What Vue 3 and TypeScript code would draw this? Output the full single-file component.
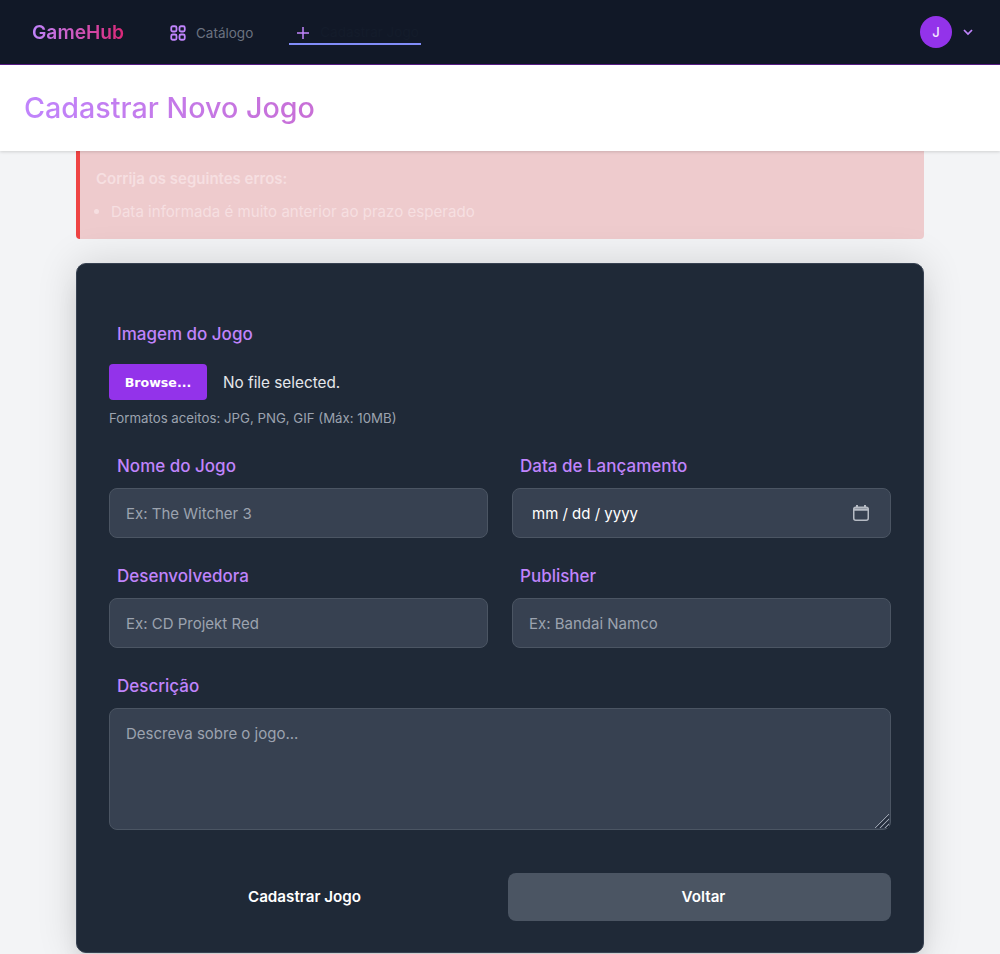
<script setup lang="ts">
const row1 = [
  { label: 'Nome do Jogo', placeholder: 'Ex: The Witcher 3' },
]
const row2 = [
  { label: 'Desenvolvedora', placeholder: 'Ex: CD Projekt Red' },
  { label: 'Publisher', placeholder: 'Ex: Bandai Namco' },
]
</script>

<template>
  <div class="page">
    <nav class="nav">
      <span class="logo">GameHub</span>
      <a class="link">
        <svg class="grid-icon" width="18" height="18" viewBox="0 0 24 24" fill="none" stroke="#c084fc" stroke-width="2.4">
          <rect x="3" y="3" width="7" height="7" rx="2" />
          <rect x="14" y="3" width="7" height="7" rx="2" />
          <rect x="3" y="14" width="7" height="7" rx="2" />
          <rect x="14" y="14" width="7" height="7" rx="2" />
        </svg>
        <span>Catálogo</span>
      </a>
      <a class="link active">
        <svg class="plus-icon" width="18" height="18" viewBox="0 0 24 24" fill="none" stroke="#c084fc" stroke-width="2">
          <path d="M12 4v16M4 12h16" />
        </svg>
        <span class="hidden-label">Cadastrar Jogo</span>
      </a>
      <div class="user">
        <span class="avatar">J</span>
        <svg width="12" height="12" viewBox="0 0 24 24" fill="none" stroke="#c084fc" stroke-width="3.5">
          <path d="M4 8l8 8 8-8" />
        </svg>
      </div>
    </nav>

    <header class="header">
      <h1>Cadastrar Novo Jogo</h1>
    </header>

    <main class="main">
      <div class="alert">
        <strong>Corrija os seguintes erros:</strong>
        <ul><li>Data informada é muito anterior ao prazo esperado</li></ul>
      </div>

      <form class="card" @submit.prevent>
        <div class="field file-field">
          <label>Imagem do Jogo</label>
          <div class="file">
            <button type="button" class="browse">Browse...</button>
            <span>No file selected.</span>
          </div>
          <small>Formatos aceitos: JPG, PNG, GIF (Máx: 10MB)</small>
        </div>

        <div class="grid">
          <div class="field" v-for="f in row1" :key="f.label">
            <label>{{ f.label }}</label>
            <input :placeholder="f.placeholder" />
          </div>
          <div class="field">
            <label>Data de Lançamento</label>
            <div class="date">
              <span>mm / dd / yyyy</span>
              <svg width="18" height="18" viewBox="0 0 18 18" fill="none" stroke="#b6bbc4" stroke-width="1.5">
                <rect x="1.75" y="3.25" width="14.5" height="13" rx="2" />
                <path d="M1.75 5.5h14.5" stroke-width="2.5" />
                <path d="M5 1v3M13 1v3" stroke-width="2" />
              </svg>
            </div>
          </div>
          <div class="field" v-for="f in row2" :key="f.label">
            <label>{{ f.label }}</label>
            <input :placeholder="f.placeholder" />
          </div>
        </div>

        <div class="field">
          <label>Descrição</label>
          <div class="area">
            <textarea placeholder="Descreva sobre o jogo..."></textarea>
            <svg class="grip" width="16" height="16" viewBox="0 0 16 16" stroke-width="1">
              <path d="M15 1L1 15M15 6L6 15M15 11L11 15" stroke="#9ca3af" />
              <path d="M15 3.5L3.5 15M15 8.5L8.5 15M15 13L13 15" stroke="#111827" />
            </svg>
          </div>
        </div>

        <div class="actions">
          <button type="submit" class="btn submit">Cadastrar Jogo</button>
          <button type="button" class="btn back">Voltar</button>
        </div>
      </form>
    </main>
  </div>
</template>

<style>
html, body { margin: 0; background: #f3f4f6; }
</style>

<style scoped>
.page {
  font-family: "Inter", "Noto Sans", sans-serif;
  background: #f3f4f6;
  min-height: 954px;
}
.nav {
  height: 64px;
  background: #111827;
  border-bottom: 1px solid #581c87;
  display: flex;
  align-items: center;
  padding: 0 26px 0 32px;
}
.logo {
  font-size: 19.2px;
  font-weight: 600;
  width: 138px;
  background: linear-gradient(90deg, #c084fc, #db2777);
  background-clip: text;
  -webkit-background-clip: text;
  color: transparent;
  background-size: 92px 100%;
  background-repeat: no-repeat;
}
.link {
  display: flex;
  align-items: center;
  gap: 8px;
  font-size: 13.5px;
  color: #6b7280;
  height: 24px;
  padding-top: 1px;
}
.grid-icon { margin-left: -1px; margin-right: 1px; }
.link.active {
  margin-left: 36px;
  height: 24px;
  width: 132px;
  box-sizing: border-box;
  padding: 0 0 0 5px;
  border-bottom: 2px solid #818cf8;
  margin-top: 1px;
}
.plus-icon { margin-top: 2px; }
.hidden-label { color: #141c2b; white-space: nowrap; }
.user { margin-left: auto; display: flex; align-items: center; gap: 10px; }
.avatar {
  width: 32px;
  height: 32px;
  border-radius: 50%;
  background: #9333ea;
  color: #f3e8ff;
  display: flex;
  align-items: center;
  justify-content: center;
  font-size: 13px;
  font-weight: 500;
}
.header {
  height: 86px;
  box-sizing: border-box;
  padding: 0 24px 2px;
  background: #fff;
  display: flex;
  align-items: center;
  box-shadow: 0 1px 3px rgba(0, 0, 0, 0.15);
  position: relative;
}
h1 {
  margin: 0;
  font-size: 28.7px;
  font-weight: 500;
  background: linear-gradient(90deg, #c084fc, #c86fd6);
  background-clip: text;
  -webkit-background-clip: text;
  color: transparent;
}
.main { width: 848px; margin: 0 auto; }
.alert {
  box-sizing: border-box;
  height: 88px;
  background: #eecbcd;
  border-left: 4px solid #ef4444;
  border-radius: 0 0 4px 4px;
  padding: 18px 16px;
  color: #f6dfe1;
  font-size: 15.1px;
  line-height: 20px;
}
.alert strong { font-size: 15px; font-weight: 600; display: block; }
.alert ul { margin: 13px 0 0; padding: 0 0 0 15px; }
.card {
  box-sizing: border-box;
  margin-top: 24px;
  height: 690px;
  background: #1f2937;
  border: 1px solid #374151;
  border-radius: 10px;
  padding: 58px 32px 0;
  box-shadow: 0 0 40px rgba(0, 0, 0, 0.14), 0 20px 25px -5px rgba(0, 0, 0, 0.1);
  display: flex;
  flex-direction: column;
}
.field { display: flex; flex-direction: column; }
label {
  color: #c084fc;
  font-size: 17px;
  font-weight: 500;
  line-height: 24px;
  padding-left: 8px;
  margin-bottom: 10px;
}
.file { display: flex; align-items: center; gap: 16px; color: #e5e7eb; font-size: 15.3px; margin-top: 8px; }
.browse {
  width: 98px;
  height: 36px;
  background: #9333ea;
  color: #fff;
  border: 0;
  border-radius: 4px;
  font-family: "DejaVu Sans", sans-serif;
  font-size: 12.6px;
  font-weight: 700;
  padding: 0;
}
small { color: #9ca3af; font-size: 13.25px; line-height: 16px; margin-top: 10px; }
.grid { display: grid; grid-template-columns: 1fr 1fr; column-gap: 24px; row-gap: 26px; margin-top: 28px; }
input, .date, textarea {
  box-sizing: border-box;
  width: 100%;
  background: #374151;
  border: 1px solid #4b5563;
  border-radius: 8px;
  color: #f3f4f6;
  font-family: inherit;
  font-size: 15px;
  outline: none;
}
input, .date { height: 50px; padding: 0 16px; }
.date {
  display: flex;
  align-items: center;
  justify-content: space-between;
  padding: 0 20px 0 19px;
  color: #fff;
}
input::placeholder, textarea::placeholder { color: #9ca3af; opacity: 1; }
.grid + .field { margin-top: 26px; }
.area { position: relative; height: 122px; }
textarea { display: block; height: 122px; padding: 15px 16px; resize: none; }
.grip { position: absolute; right: 1px; bottom: 1px; }
.actions { display: grid; grid-template-columns: 1fr 1fr; column-gap: 16px; margin-top: 43px; }
.btn {
  height: 48px;
  border: 0;
  border-radius: 8px;
  color: #fff;
  font-family: inherit;
  font-size: 15.2px;
  font-weight: 600;
  padding: 0 0 2px 8px;
}
.submit { background: transparent; }
.back { background: #4b5563; }
</style>
